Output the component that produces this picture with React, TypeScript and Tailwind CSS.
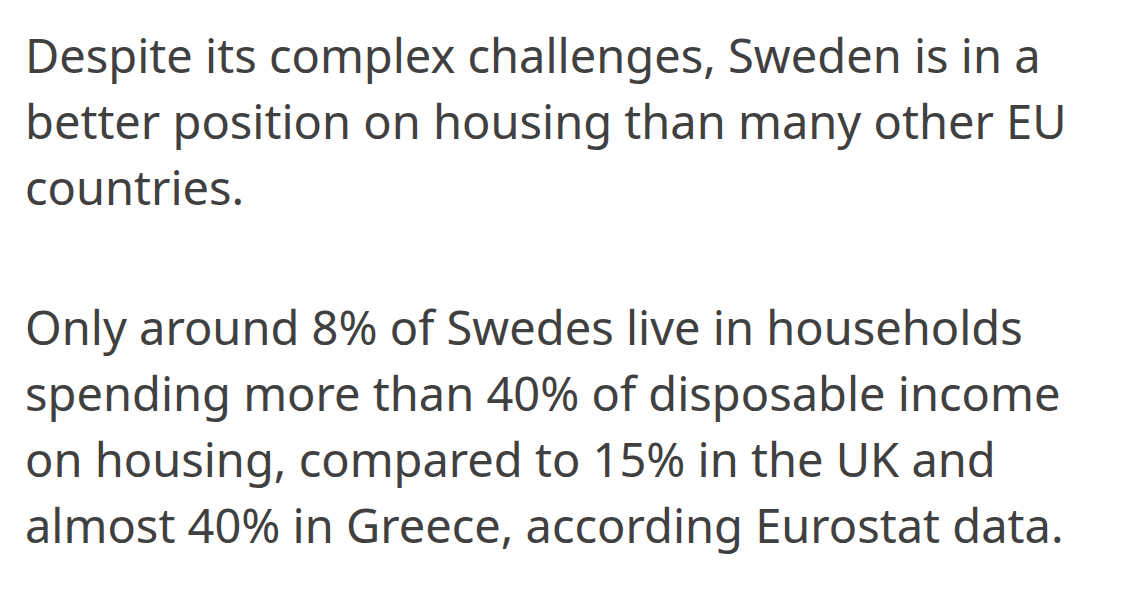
export default function App() {
  return (
    <div className="min-h-[597px] w-[1124px] bg-white pl-[25px] pr-[30px] pt-[22px] text-[#404040] [font-family:'Noto_Sans',sans-serif]">
      <p className="text-[47px] leading-[66px]">
        Despite its complex challenges, Sweden is in a better position on housing than many other EU countries.
      </p>
      <p className="mt-[74px] text-[47px] leading-[66px]">
        Only around 8% of Swedes live in households spending more than 40% of disposable income on housing, compared to 15% in the UK and almost 40% in Greece, according Eurostat data.
      </p>
    </div>
  )
}
